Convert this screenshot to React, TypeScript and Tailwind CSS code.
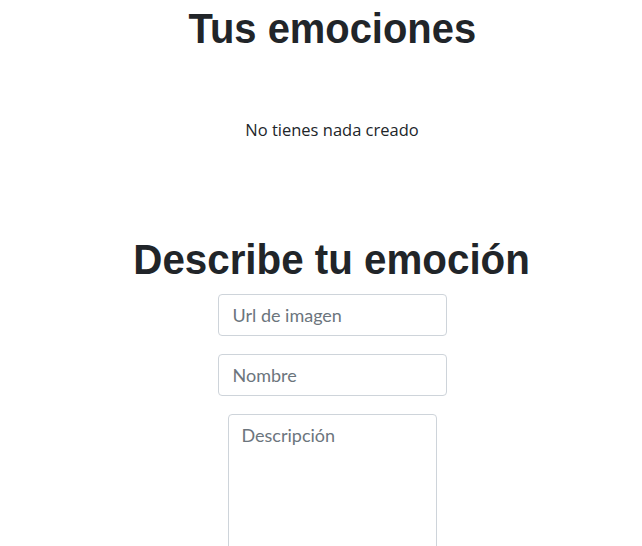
const headingFont = { fontFamily: '"Liberation Sans", Arial, sans-serif' };

const App = () => {
  return (
    <main className="flex min-h-screen flex-col items-center bg-white pl-[22px] text-[#212529]">
      <h1 className="mt-[4px] inline-block scale-x-[0.95] text-[42px] font-bold leading-[1.2]" style={headingFont}>
        Tus emociones
      </h1>
      <p className="mt-[64px] text-[16.5px] leading-[24px]" style={{ fontFamily: '"Open Sans", sans-serif' }}>
        No tienes nada creado
      </p>
      <h2 className="mt-[93px] inline-block scale-x-[0.96] text-[42px] font-bold leading-[1.2]" style={headingFont}>
        Describe tu emoción
      </h2>
      <form className="mt-[8px] flex flex-col items-center gap-[18px]" style={{ fontFamily: "Lato, sans-serif" }}>
        <input
          type="text"
          placeholder="Url de imagen"
          className="h-[42px] w-[229px] rounded-[4px] border border-[#ced4da] px-[14px] text-[18px] placeholder:text-[#6c757d]"
        />
        <input
          type="text"
          placeholder="Nombre"
          className="h-[42px] w-[229px] rounded-[4px] border border-[#ced4da] px-[14px] text-[18px] placeholder:text-[#6c757d]"
        />
        <textarea
          placeholder="Descripción"
          className="h-[150px] w-[209px] resize-none rounded-[4px] border border-[#ced4da] px-[13px] py-[7px] text-[18px] placeholder:text-[#6c757d]"
        />
      </form>
    </main>
  );
};

export default App;
